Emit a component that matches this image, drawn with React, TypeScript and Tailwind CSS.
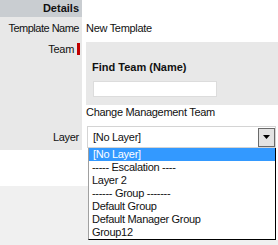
const layerOptions = [
  "[No Layer]",
  "----- Escalation ----",
  "Layer 2",
  "------ Group -------",
  "Default Group",
  "Default Manager Group",
  "Group12",
];

function LayerDropdown() {
  return (
    <div className="absolute left-[88px] top-[148px] w-[190px] bg-white">
      <div className="w-[188px] border-l border-r border-b border-l-[#a0a0a0] border-r-black border-b-black">
        {layerOptions.map((opt, i) => (
          <div
            key={opt}
            className={
              i === 0
                ? "h-[13px] leading-[13px] pl-[4px] bg-[#3399ff] text-white whitespace-pre"
                : "h-[13px] leading-[13px] pl-[3px] whitespace-pre"
            }
          >
            {opt}
          </div>
        ))}
      </div>
    </div>
  );
}

function App() {
  return (
    <div className="relative w-[278px] h-[245px] overflow-hidden bg-[#f0f0f0] text-[11px] tracking-[-0.3px] text-[#111] font-['Liberation_Sans',Arial,sans-serif]">
      <div className="h-[186px] bg-white">
        {/* header */}
        <div className="flex h-[17px]">
          <div className="w-[82px] bg-[#c9cdd1] text-right pr-[3px] font-bold leading-[17px] tracking-normal">
            Details
          </div>
        </div>

        {/* template name */}
        <div className="flex h-[23px]">
          <div className="w-[82px] bg-[#e8e8e8] flex items-center justify-end pr-[3px] tracking-[-0.5px]">
            Template Name
          </div>
          <div className="flex-1 flex items-center pl-[4px]">New Template</div>
        </div>

        {/* team */}
        <div className="flex h-[81px]">
          <div className="w-[82px] bg-[#e8e8e8] pt-[3px] pr-[2px]">
            <div className="flex justify-end items-center h-[12px] leading-[12px]">
              <span>Team</span>
              <span className="ml-[3px] w-[3px] h-[12px] bg-[#c00000]" />
            </div>
          </div>
          <div className="flex-1 pl-[4px]">
            <div className="mt-[2px] h-[63px] bg-[#e8e8e8] pl-[6px] pt-[18px]">
              <div className="font-bold leading-[14px] tracking-normal">Find Team (Name)</div>
              <div className="mt-[7px] ml-[1px] w-[124px] h-[16px] bg-white border border-[#dcdcdc]" />
            </div>
            <div className="leading-[14px]">Change Management Team</div>
          </div>
        </div>

        {/* layer */}
        <div className="flex h-[29px]">
          <div className="w-[82px] bg-[#e8e8e8] flex items-center justify-end pr-[3px] pt-[3px]">
            Layer
          </div>
          <div className="flex-1 pl-[5px] pt-[5px]">
            <div className="w-[189px] h-[22px] bg-white border border-[#d4d4d4] flex items-center">
              <span className="flex-1 pl-[5px]">[No Layer]</span>
              <span className="w-[17px] h-[19px] bg-[#e3e3e3] border border-[#6a6a6a] flex items-center justify-center">
                <svg width="7" height="4" viewBox="0 0 7 4">
                  <path d="M0 0h7L3.5 4z" fill="#000" />
                </svg>
              </span>
            </div>
          </div>
        </div>
      </div>

      <LayerDropdown />
    </div>
  );
}

export default App;
